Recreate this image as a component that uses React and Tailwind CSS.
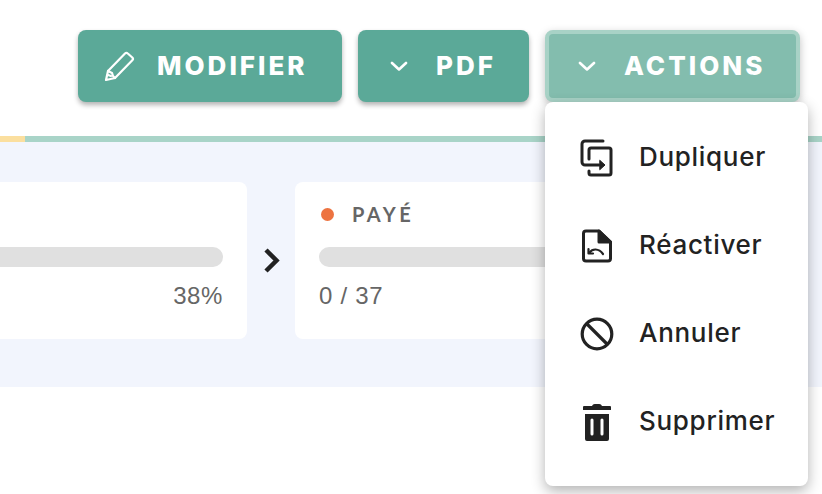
const Chevron = () => (
  <svg width="18" height="10" viewBox="0 0 18 10" fill="none" stroke="white" strokeWidth="2.6" strokeLinecap="round" strokeLinejoin="round">
    <path d="M2 2l7 6.5L16 2" />
  </svg>
)

const PencilIcon = () => (
  <svg width="32" height="32" viewBox="0 0 32 32" fill="none" stroke="white" strokeWidth="2.2" strokeLinejoin="round" strokeLinecap="round">
    <path d="M2 30l2-9L21 3.5a2 2 0 0 1 2.8 0l4.5 4a2 2 0 0 1 0 2.8L11 28z" />
    <path d="M4 21l4 2 1 3 2 2" />
    <path d="M4 25l3 1" />
  </svg>
)

const DuplicateIcon = () => (
  <svg width="34" height="38" viewBox="0 0 34 38" fill="none" stroke="#222" strokeWidth="3" strokeLinecap="round" strokeLinejoin="round">
    <path d="M23 2H5a3 3 0 0 0-3 3v18a3 3 0 0 0 3 3h14" />
    <path d="M9 20V11a2 2 0 0 1 2-2h18a2 2 0 0 1 2 2v23a2 2 0 0 1-2 2H11a2 2 0 0 1-2-2v-2" />
    <path d="M20 21.5l5 4.5-5 4.5z" fill="#222" strokeWidth="1" />
  </svg>
)

const FileUndoIcon = () => (
  <svg width="30" height="34" viewBox="2 0 30 34" fill="none" stroke="#222" strokeWidth="3" strokeLinejoin="round" strokeLinecap="round">
    <path d="M19 2H6a2.5 2.5 0 0 0-2.500 2.500v25A2.500 2.500 0 0 0 6 32h22a2.500 2.500 0 0 0 2.500-2.500V13z" />
    <path d="M19 2l11.500 11H19z" fill="#222" />
    <path d="M9.500 23.500c3-4 9-4.500 13.500 1.500" strokeWidth="2.200" />
    <path d="M8.500 20v4.500H13" strokeWidth="2.200" />
  </svg>
)

const BanIcon = () => (
  <svg width="34" height="34" viewBox="0 0 34 34" fill="none" stroke="#222" strokeWidth="3.200">
    <circle cx="17" cy="17" r="14.800" />
    <path d="M6.500 6.500l21 21" />
  </svg>
)

const TrashIcon = () => (
  <svg width="34" height="38" viewBox="0 0 34 38" fill="#222">
    <path d="M12 3a3 3 0 0 1 3-2h4a3 3 0 0 1 3 2h8a1 1 0 0 1 1 1v3H3V4a1 1 0 0 1 1-1z" />
    <path fillRule="evenodd" d="M5 11h24v25a2 2 0 0 1-2 2H7a2 2 0 0 1-2-2zM12 15.500a1.500 1.500 0 0 0-1.500 1.500v14a1.500 1.500 0 0 0 3 0V17a1.500 1.500 0 0 0-1.500-1.500zM22 15.500a1.500 1.500 0 0 0-1.500 1.500v14a1.500 1.500 0 0 0 3 0V17a1.500 1.500 0 0 0-1.500-1.500z" />
  </svg>
)

const menuItems = [
  { label: 'Dupliquer', icon: DuplicateIcon },
  { label: 'Réactiver', icon: FileUndoIcon },
  { label: 'Annuler', icon: BanIcon },
  { label: 'Supprimer', icon: TrashIcon },
]

export default function App() {
  return (
    <div className="relative w-[822px] h-[494px] overflow-hidden bg-white font-['Inter',sans-serif]">
      {/* Top buttons */}
      <div className="flex justify-end gap-4 pt-[30px] pr-[22px]">
        <button className="flex items-center w-[264px] h-[72px] pl-[26px] rounded-lg bg-[#5ba998] shadow-[0_3px_5px_rgba(0,0,0,0.3)] text-white text-[26px] font-extrabold tracking-[3px]">
          <PencilIcon />
          <span className="ml-[21px] pb-[2px]">MODIFIER</span>
        </button>
        <button className="flex items-center w-[171px] h-[72px] pl-[32px] rounded-lg bg-[#5ba998] shadow-[0_3px_5px_rgba(0,0,0,0.3)] text-white text-[26px] font-extrabold tracking-[3px]">
          <Chevron />
          <span className="ml-[28px] pb-[2px]">PDF</span>
        </button>
        <div className="relative">
          <button className="flex items-center w-[255px] h-[72px] pl-[29px] rounded-lg bg-[#83bdae] border-4 border-[#a8d2c6] shadow-[0_3px_8px_rgba(0,0,0,0.25)] text-white text-[26px] font-extrabold tracking-[3px]">
            <Chevron />
            <span className="ml-[28px] pb-[2px]">ACTIONS</span>
          </button>

          {/* Dropdown */}
          <div className="absolute z-10 top-[72px] left-0 w-[263px] h-[384px] pt-[12px] rounded-lg bg-white shadow-[0_5px_14px_rgba(0,0,0,0.3)]">
            {menuItems.map(({ label, icon: Icon }) => (
              <div key={label} className="flex items-center h-[88px] pl-[35px]">
                <div className="flex justify-center w-[34px]">
                  <Icon />
                </div>
                <span className="ml-[25px] pb-[3px] text-[26px] tracking-[0.7px] font-medium text-[#222]">{label}</span>
              </div>
            ))}
          </div>
        </div>
      </div>

      {/* Progress strip */}
      <div className="flex h-[6px] mt-[34px]">
        <div className="w-[25px] bg-[#fbdf9f]" />
        <div className="flex-1 bg-[#a9d4c8]" />
      </div>

      {/* Steps panel */}
      <div className="flex items-center h-[245px] pb-[8px] bg-[#f2f5fd]">
        <div className="-ml-3 w-[259px] h-[157px] pt-[65px] pr-[24px] rounded-lg bg-white">
          <div className="h-5 rounded-full bg-[#e0e0e0]" />
          <p className="mt-[15px] text-right text-[24px] leading-[28px] tracking-[0.6px] text-[#666] font-['Liberation_Sans',sans-serif]">38%</p>
        </div>
        <div className="flex justify-center w-[48px]">
          <svg width="17" height="25" viewBox="0 0 17 25" fill="none" stroke="#222" strokeWidth="4.5">
            <path d="M3 2l10.500 10.500L3 23" />
          </svg>
        </div>
        <div className="w-[440px] h-[157px] pt-[22px] pl-[24px] rounded-lg bg-white">
          <div className="flex items-center h-[20px]">
            <span className="ml-[2px] w-[13px] h-[13px] rounded-full bg-[#ed7340]" />
            <span className="ml-[18px] text-[20px] font-bold tracking-[3.5px] text-[#666] font-['Lato',sans-serif]">PAYÉ</span>
          </div>
          <div className="h-5 mt-[23px] rounded-l-full bg-[#e0e0e0]" />
          <p className="mt-[15px] text-[24px] leading-[28px] tracking-[0.7px] text-[#666] font-['Liberation_Sans',sans-serif]">0 / 37</p>
        </div>
      </div>
    </div>
  )
}
